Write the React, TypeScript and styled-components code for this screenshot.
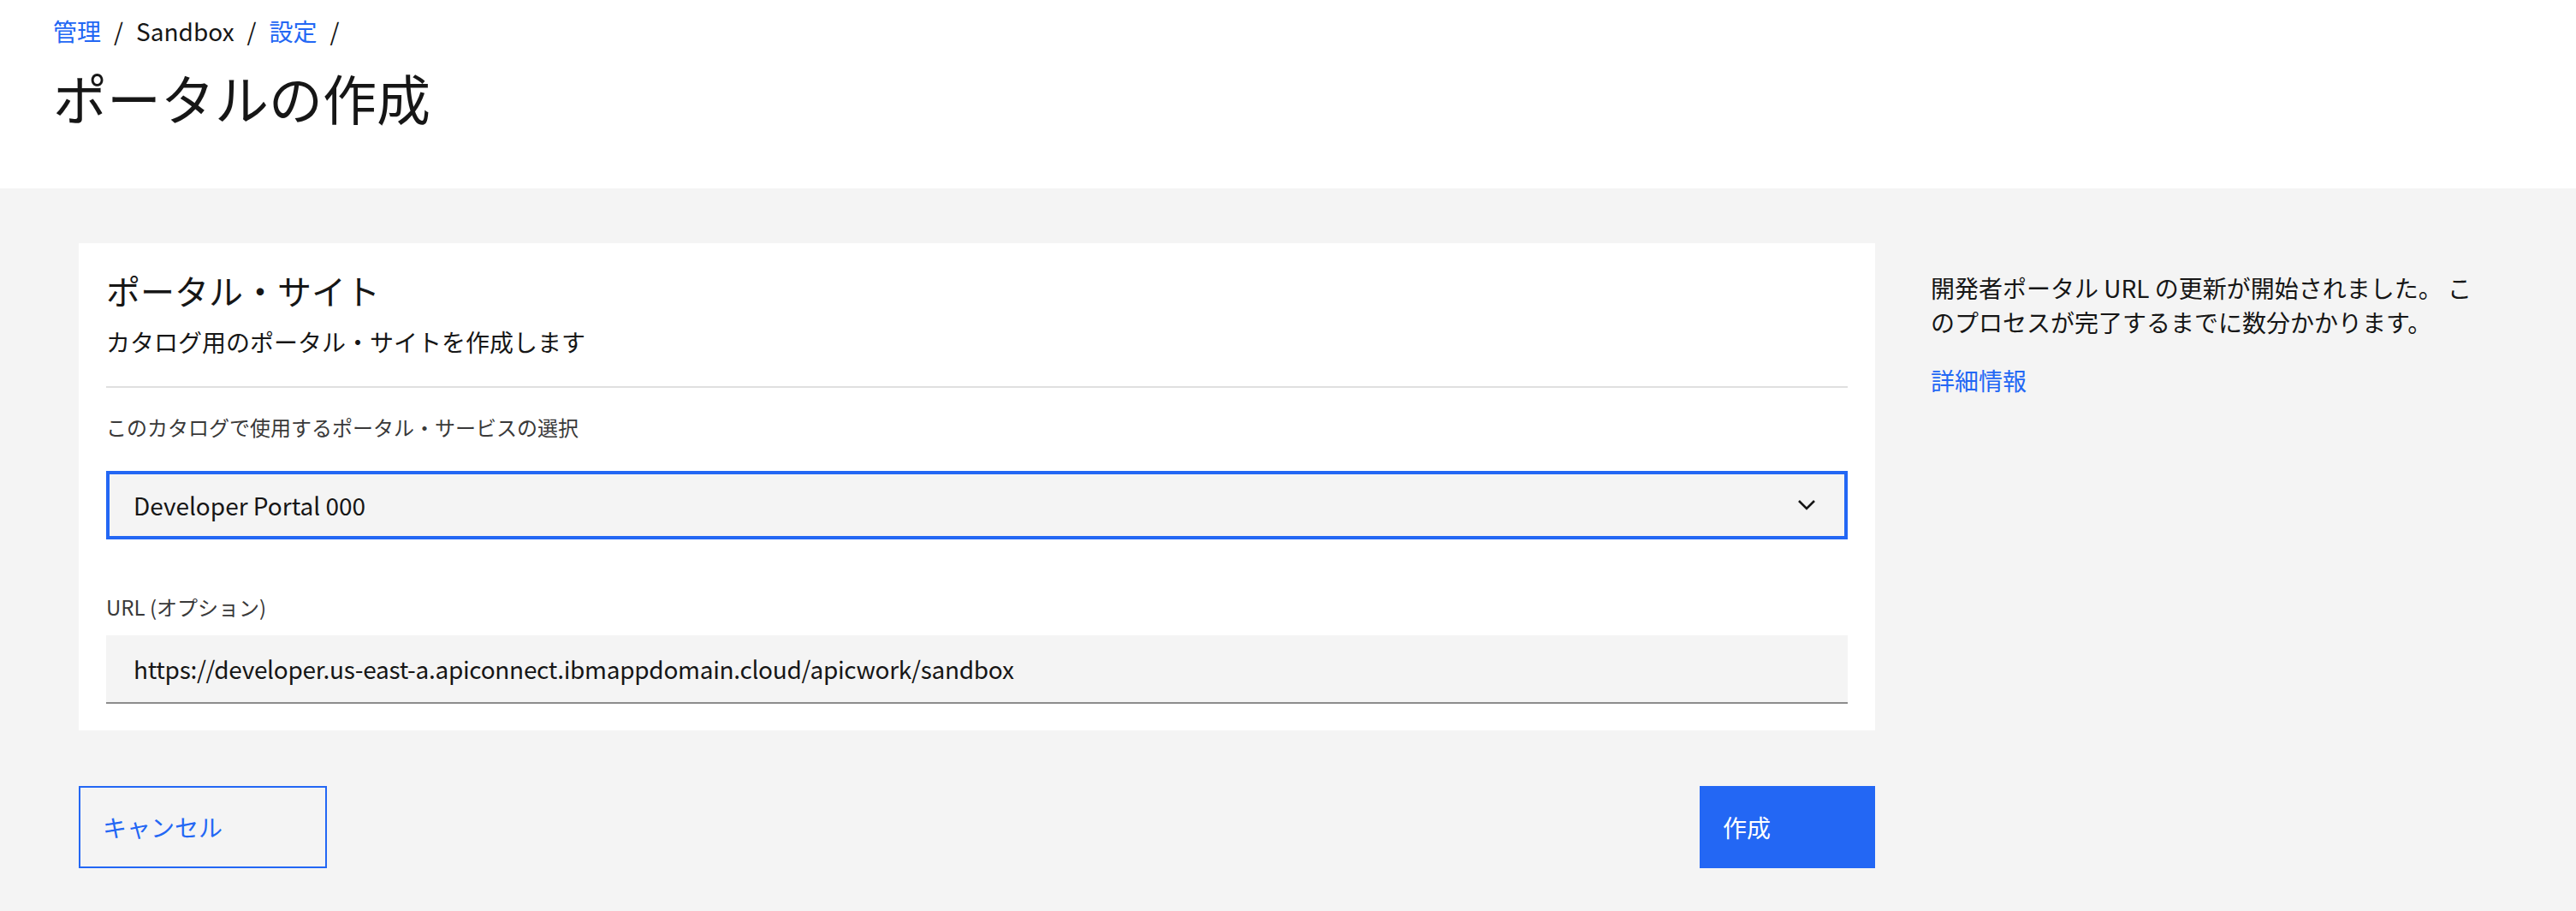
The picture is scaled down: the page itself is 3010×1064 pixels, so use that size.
import styled, { createGlobalStyle } from "styled-components";

const GlobalStyle = createGlobalStyle`
  html, body {
    margin: 0;
    padding: 0;
    background: #f4f4f4;
  }
  body {
    font-family: "Noto Sans CJK JP", "Noto Sans", sans-serif;
    color: #161616;
  }
  #root {
    min-height: 1064px;
  }
`;

const blue = "#2367f4";

const Header = styled.header`
  background: #ffffff;
  height: 220px;
  box-sizing: border-box;
  padding: 18px 62px 0;
`;

const Breadcrumb = styled.nav`
  display: flex;
  align-items: center;
  font-size: 28px;
  line-height: 36px;
`;

const Crumb = styled.a<{ $link?: boolean }>`
  color: ${(p) => (p.$link ? blue : "#161616")};
  text-decoration: none;
  cursor: ${(p) => (p.$link ? "pointer" : "default")};
`;

const Separator = styled.span`
  margin: 0 15px;
  color: #161616;
`;

const PageTitle = styled.h1`
  margin: 19px 0 0;
  font-size: 63px;
  line-height: 80px;
  font-weight: 400;
`;

const Main = styled.main`
  display: flex;
  align-items: flex-start;
  gap: 65px;
  padding: 64px 0 0 92px;
`;

const FormColumn = styled.div`
  width: 2099px;
  display: flex;
  flex-direction: column;
  gap: 65px;
`;

const Card = styled.section`
  background: #ffffff;
  padding: 29px 32px 31px;
`;

const CardHead = styled.div`
  padding-bottom: 32px;
  border-bottom: 2px solid #e0e0e0;
`;

const CardTitle = styled.h2`
  margin: 0;
  font-size: 40px;
  line-height: 52px;
  font-weight: 400;
`;

const CardSubtitle = styled.p`
  margin: 14px 0 0;
  font-size: 28px;
  line-height: 40px;
`;

const FieldLabel = styled.label<{ $top: number; $bottom: number }>`
  display: block;
  margin: ${(p) => p.$top}px 0 ${(p) => p.$bottom}px;
  font-size: 24px;
  line-height: 32px;
  color: #393939;
`;

const SelectBox = styled.div`
  height: 80px;
  box-sizing: border-box;
  border: 4px solid ${blue};
  background: #f4f4f4;
  padding: 0 34px 0 28px;
  display: flex;
  align-items: center;
  justify-content: space-between;
  font-size: 28px;
  cursor: pointer;
`;

const TextField = styled.div`
  height: 80px;
  box-sizing: border-box;
  border-bottom: 2px solid #8d8d8d;
  background: #f4f4f4;
  padding: 0 32px;
  display: flex;
  align-items: center;
  font-size: 28px;
  letter-spacing: -0.3px;
`;

const ButtonRow = styled.div`
  display: flex;
  justify-content: space-between;
`;

const Button = styled.button<{ $primary?: boolean; $width: number }>`
  width: ${(p) => p.$width}px;
  height: 96px;
  box-sizing: border-box;
  padding: 0 0 0 ${(p) => (p.$primary ? 27 : 26)}px;
  display: flex;
  align-items: center;
  font-family: inherit;
  font-size: 28px;
  cursor: pointer;
  border: ${(p) => (p.$primary ? "none" : `2px solid ${blue}`)};
  background: ${(p) => (p.$primary ? blue : "transparent")};
  color: ${(p) => (p.$primary ? "#ffffff" : blue)};
`;

const Aside = styled.aside`
  width: 640px;
  padding-top: 32px;
  font-size: 28px;
  line-height: 40px;
`;

const Note = styled.p`
  margin: 0;
`;

const MoreLink = styled.a`
  display: block;
  margin-top: 28px;
  color: ${blue};
  text-decoration: none;
`;

const Chevron = () => (
  <svg width="20" height="12" viewBox="0 0 20 12" fill="none">
    <polyline points="1,1 10,10 19,1" stroke="#161616" strokeWidth="2.6" />
  </svg>
);

const App = () => {
  return (
    <>
      <GlobalStyle />
      <Header>
        <Breadcrumb>
          <Crumb $link>管理</Crumb>
          <Separator>/</Separator>
          <Crumb>Sandbox</Crumb>
          <Separator>/</Separator>
          <Crumb $link>設定</Crumb>
          <Separator>/</Separator>
        </Breadcrumb>
        <PageTitle>ポータルの作成</PageTitle>
      </Header>
      <Main>
        <FormColumn>
          <Card>
            <CardHead>
              <CardTitle>ポータル・サイト</CardTitle>
              <CardSubtitle>カタログ用のポータル・サイトを作成します</CardSubtitle>
            </CardHead>
            <FieldLabel $top={30} $bottom={35}>
              このカタログで使用するポータル・サービスの選択
            </FieldLabel>
            <SelectBox>
              <span>Developer Portal 000</span>
              <Chevron />
            </SelectBox>
            <FieldLabel $top={63} $bottom={17}>
              URL (オプション)
            </FieldLabel>
            <TextField>
              https://developer.us-east-a.apiconnect.ibmappdomain.cloud/apicwork/sandbox
            </TextField>
          </Card>
          <ButtonRow>
            <Button $width={290}>キャンセル</Button>
            <Button $primary $width={205}>
              作成
            </Button>
          </ButtonRow>
        </FormColumn>
        <Aside>
          <Note>
            開発者ポータル URL の更新が開始されました。 このプロセスが完了するまでに数分かかります。
          </Note>
          <MoreLink>詳細情報</MoreLink>
        </Aside>
      </Main>
    </>
  );
};

export default App;
